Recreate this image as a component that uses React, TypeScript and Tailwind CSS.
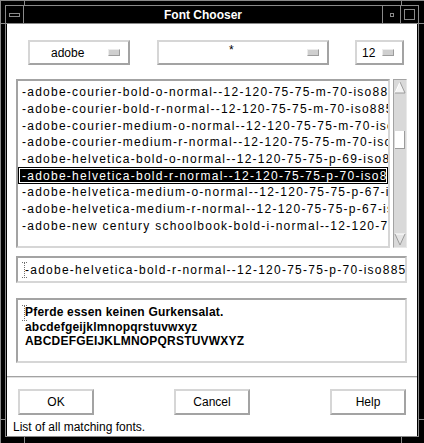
import React from "react";

const rows = [
  "-adobe-courier-bold-o-normal--12-120-75-75-m-70-iso8859-1",
  "-adobe-courier-bold-r-normal--12-120-75-75-m-70-iso8859-1",
  "-adobe-courier-medium-o-normal--12-120-75-75-m-70-iso8859-1",
  "-adobe-courier-medium-r-normal--12-120-75-75-m-70-iso8859-1",
  "-adobe-helvetica-bold-o-normal--12-120-75-75-p-69-iso8859-1",
  "-adobe-helvetica-bold-r-normal--12-120-75-75-p-70-iso8859-1",
  "-adobe-helvetica-medium-o-normal--12-120-75-75-p-67-iso8859-1",
  "-adobe-helvetica-medium-r-normal--12-120-75-75-p-67-iso8859-1",
  "-adobe-new century schoolbook-bold-i-normal--12-120-75-75-p-77-iso8859-1",
];

function Indicator() {
  return (
    <div className="w-[12px] h-[7px] shrink-0 bg-[#cfcfcf] border border-t-[#ececec] border-l-[#ececec] border-b-[#9c9c9c] border-r-[#9c9c9c]" />
  );
}

function IBeam() {
  return (
    <svg width="5" height="16" viewBox="0 0 5 16" className="shrink-0">
      <path d="M0 0.5H5M0 15.5H5" stroke="#707070" strokeWidth="1" strokeDasharray="1 1" />
      <path d="M2.5 1V15" stroke="#707070" strokeWidth="1" strokeDasharray="1 1" />
    </svg>
  );
}

function PushButton({ label }: { label: string }) {
  return (
    <div className="w-[76px] h-[26px] flex items-center justify-center border-2 border-t-[#d6d6d6] border-l-[#d6d6d6] border-b-[#a3a3a3] border-r-[#a3a3a3] text-[12px] text-black">
      {label}
    </div>
  );
}

export default function App() {
  return (
    <div className="relative w-[424px] h-[443px] bg-black border-t border-l border-[#8a8a8a] pt-[4px] pl-[4px] font-['Liberation_Sans',Arial,sans-serif] overflow-hidden">
      {/* frame tick marks */}
      <div className="absolute left-[23px] top-0 w-px h-[5px] bg-[#8a8a8a]" />
      <div className="absolute left-[400px] top-0 w-px h-[5px] bg-[#8a8a8a]" />
      <div className="absolute left-[23px] bottom-0 w-px h-[6px] bg-[#8a8a8a]" />
      <div className="absolute left-[400px] bottom-0 w-px h-[6px] bg-[#8a8a8a]" />
      <div className="absolute left-0 top-[22px] w-[5px] h-px bg-[#8a8a8a]" />
      <div className="absolute right-0 top-[22px] w-[5px] h-px bg-[#8a8a8a]" />
      <div className="absolute left-0 top-[418px] w-[5px] h-px bg-[#8a8a8a]" />
      <div className="absolute right-0 top-[418px] w-[5px] h-px bg-[#8a8a8a]" />

      <div className="w-[414px] h-[432px] border border-[#8a8a8a] flex flex-col">
        {/* title bar */}
        <div className="h-[17px] flex bg-black">
          <div className="w-[17px] h-full flex items-center justify-center">
            <div className="w-[11px] h-[4px] border border-[#8a8a8a]" />
          </div>
          <div className="w-px h-full bg-[#8a8a8a]" />
          <div className="w-[358px] h-full flex items-center justify-center text-white font-bold text-[12px] leading-none">
            Font Chooser
          </div>
          <div className="w-px h-full bg-[#8a8a8a]" />
          <div className="w-[17px] h-full flex items-center justify-center">
            <div className="w-[4px] h-[4px] border border-[#8a8a8a]" />
          </div>
          <div className="w-px h-full bg-[#8a8a8a]" />
          <div className="w-[17px] h-full flex items-center justify-center">
            <div className="w-[11px] h-[11px] border border-[#8a8a8a]" />
          </div>
        </div>
        <div className="h-px bg-[#8a8a8a]" />

        {/* client */}
        <div className="h-[412px] bg-white border-x border-black flex flex-col text-black">
          {/* option menus */}
          <div className="mt-[16px] h-[25px] flex pl-[21px]">
            <div className="w-[102px] h-[25px] flex items-center border-2 border-t-[#d6d6d6] border-l-[#d6d6d6] border-b-[#a3a3a3] border-r-[#a3a3a3] pl-[21px] pr-[8px] text-[12px]">
              <span>adobe</span>
              <div className="ml-auto"><Indicator /></div>
            </div>
            <div className="ml-[27px] w-[172px] h-[25px] flex items-center border-2 border-t-[#d6d6d6] border-l-[#d6d6d6] border-b-[#a3a3a3] border-r-[#a3a3a3] pl-[70px] pr-[8px] text-[12px]">
              <span className="mb-[6px]">*</span>
              <div className="ml-auto"><Indicator /></div>
            </div>
            <div className="ml-[26px] w-[49px] h-[25px] flex items-center border-2 border-t-[#d6d6d6] border-l-[#d6d6d6] border-b-[#a3a3a3] border-r-[#a3a3a3] pl-[5px] pr-[8px] text-[12px]">
              <span>12</span>
              <div className="ml-auto"><Indicator /></div>
            </div>
          </div>

          {/* list + scrollbar */}
          <div className="mt-[14px] h-[169px] flex pl-[9px]">
            <div className="w-[374px] h-[169px] border-2 border-t-[#a3a3a3] border-l-[#a3a3a3] border-b-[#d6d6d6] border-r-[#d6d6d6] pt-[3px] overflow-hidden">
              {rows.map((r, i) =>
                i === 5 ? (
                  <div key={i} className="h-[16.67px] bg-black p-px">
                    <div className="h-full border border-white flex items-center pl-[2px] text-white text-[12px] tracking-[1.25px] whitespace-nowrap overflow-hidden">
                      {r}
                    </div>
                  </div>
                ) : (
                  <div key={i} className="h-[16.67px] flex items-center pl-[4px] text-[12px] tracking-[1.25px] whitespace-nowrap overflow-hidden">
                    {r}
                  </div>
                )
              )}
            </div>
            <div className="ml-[3px] w-[14px] h-[169px] bg-[#d9d9d9] border border-t-[#a3a3a3] border-l-[#a3a3a3] border-b-[#e8e8e8] border-r-[#e8e8e8] flex flex-col items-center">
              <svg width="12" height="13" viewBox="0 0 12 13" className="mt-[1px]">
                <polygon points="6,1 11,12 1,12" fill="#f4f4f4" />
                <path d="M6 1L1 12" stroke="#ffffff" strokeWidth="1" />
                <path d="M6 1L11 12H1" stroke="#9c9c9c" strokeWidth="1" fill="none" />
              </svg>
              <div className="mt-[37px] w-[10px] h-[18px] bg-white border-r border-b border-[#9c9c9c]" />
              <svg width="12" height="13" viewBox="0 0 12 13" className="mt-auto mb-[1px]">
                <polygon points="1,1 11,1 6,12" fill="#e4e4e4" />
                <path d="M1 1H11" stroke="#ffffff" strokeWidth="1" />
                <path d="M11 1L6 12L1 1" stroke="#9c9c9c" strokeWidth="1" fill="none" />
              </svg>
            </div>
          </div>

          {/* text field */}
          <div className="mt-[8px] ml-[9px] w-[391px] h-[27px] border-2 border-t-[#a3a3a3] border-l-[#a3a3a3] border-b-[#d6d6d6] border-r-[#d6d6d6] flex items-center pl-[4px] overflow-hidden">
            <IBeam />
            <span className="text-[12px] tracking-[1.25px] whitespace-nowrap -ml-[2px]">
              -adobe-helvetica-bold-r-normal--12-120-75-75-p-70-iso8859-1
            </span>
          </div>

          {/* preview */}
          <div className="mt-[15px] ml-[9px] w-[391px] h-[65px] border-2 border-t-[#a3a3a3] border-l-[#a3a3a3] border-b-[#d6d6d6] border-r-[#d6d6d6] flex pl-[4px] pt-[5px] overflow-hidden">
            <IBeam />
            <div className="-ml-[2px] text-[12px] leading-[14.5px] font-bold tracking-[0.2px] whitespace-nowrap">
              <div>Pferde essen keinen Gurkensalat.</div>
              <div>abcdefgeijklmnopqrstuvwxyz</div>
              <div>ABCDEFGEIJKLMNOPQRSTUVWXYZ</div>
            </div>
          </div>

          {/* separator */}
          <div className="mt-[13px] h-px bg-[#a3a3a3]" />
          <div className="h-px bg-[#e0e0e0]" />

          {/* buttons */}
          <div className="mt-[11px] flex justify-between px-[11px]">
            <PushButton label="OK" />
            <PushButton label="Cancel" />
            <PushButton label="Help" />
          </div>

          {/* status */}
          <div className="mt-[5px] pl-[6px] text-[12px] leading-[14px]">List of all matching fonts.</div>
        </div>
      </div>
    </div>
  );
}
